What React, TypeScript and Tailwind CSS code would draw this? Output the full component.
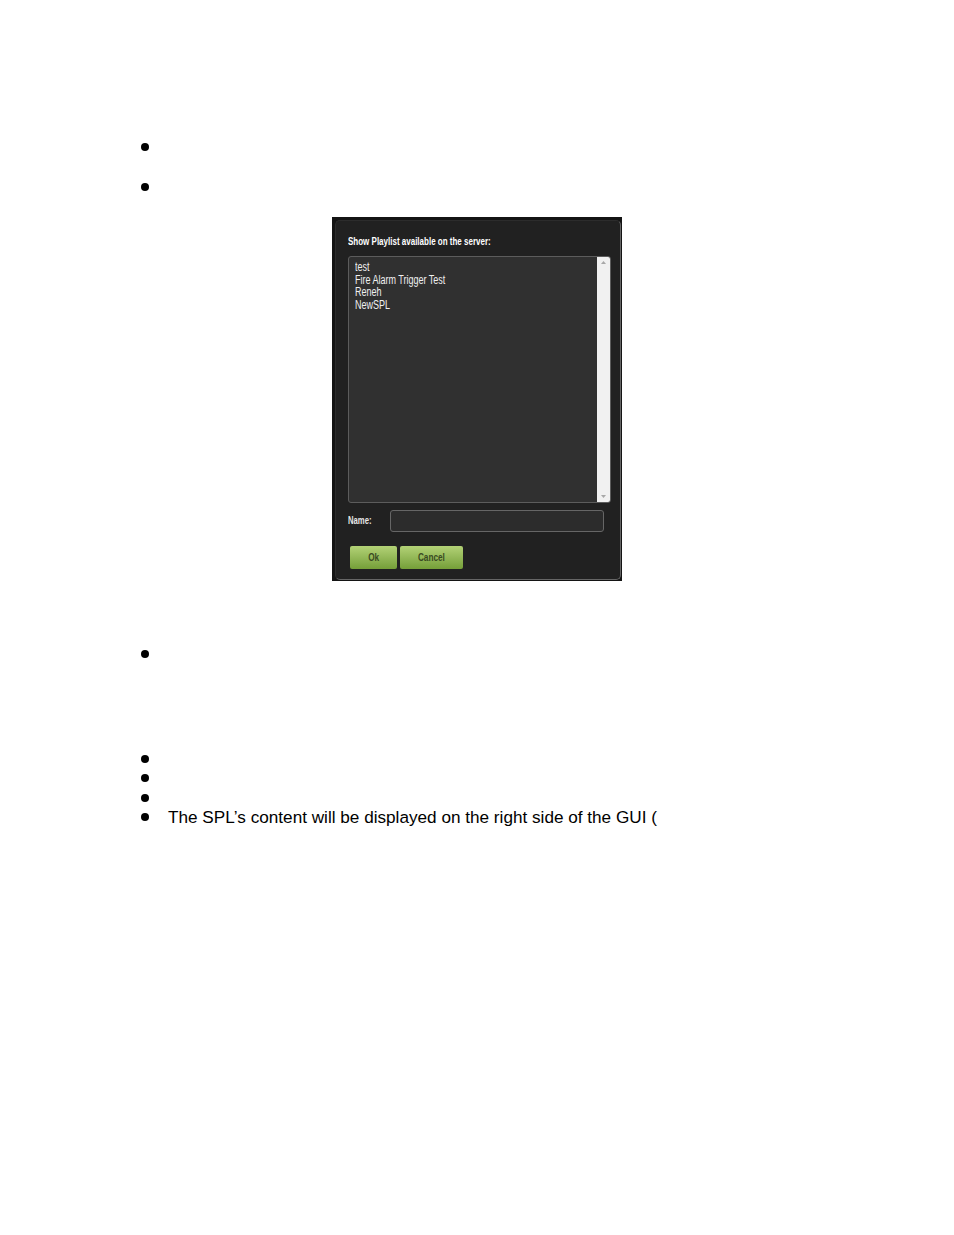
import React from 'react';

const Bullet = () => <div className="w-2 h-2 rounded-full bg-black shrink-0" />;

const BulletRow = ({ className, children }: { className: string; children?: React.ReactNode }) => (
  <div className={`flex items-center gap-[19px] pl-[141px] ${className}`}>
    <Bullet />
    {children}
  </div>
);

const names = ['test', 'Fire Alarm Trigger Test', 'Reneh', 'NewSPL'];

const ScrollArrow = ({ up }: { up?: boolean }) => (
  <svg width="7" height="5" viewBox="0 0 7 5">
    <path d={up ? 'M3.5 1 L6 4 L1 4 Z' : 'M1 1 L6 1 L3.5 4 Z'} fill="#a8a8a8" />
  </svg>
);

const PlaylistDialog = () => (
  <div className="w-[290px] h-[364px] bg-[#141414] pl-[3px] pt-[3px] pr-[1px] pb-[1px]">
    <div className="h-full rounded-[5px] border border-t-[#2c2c2c] border-l-[#2c2c2c] border-r-[#666] border-b-[#666] bg-[#212121] pl-[12px] pr-[9px] pt-[11px] font-['Liberation_Sans',sans-serif]">
      <div className="h-[20px] flex items-center whitespace-nowrap text-[10px] font-bold text-white leading-none">
        <span className="inline-block origin-left scale-x-[0.8]">Show Playlist available on the server:</span>
      </div>
      <div className="mt-[4px] h-[247px] flex rounded-[3px] border border-[#5c5c5c] bg-[#303030] overflow-hidden">
        <div className="flex-1 pl-[6px] pt-[4px] text-[12px] leading-[12.7px] text-[#f0f0f0] whitespace-nowrap">
          {names.map((name) => (
            <div key={name} className="origin-left scale-x-[0.75]">{name}</div>
          ))}
        </div>
        <div className="w-[13px] bg-[#f1f1f1] flex flex-col items-center justify-between py-[3px]">
          <ScrollArrow up />
          <ScrollArrow />
        </div>
      </div>
      <div className="mt-[7px] flex items-center h-[22px]">
        <div className="w-[42px] text-[10px] font-bold text-[#e6e6e6] leading-none">
          <span className="inline-block origin-left scale-x-[0.77]">Name:</span>
        </div>
        <div className="w-[214px] h-full rounded-[3px] border border-[#666] bg-[#2c2c2c]" />
      </div>
      <div className="mt-[14px] ml-[2px] flex gap-[3px] text-[10px] font-bold text-[#3a4a22]">
        <div className="w-[47px] h-[23px] rounded-[2px] bg-gradient-to-b from-[#b3d276] to-[#759f38] flex items-center justify-center">
          <span className="scale-x-[0.82]">Ok</span>
        </div>
        <div className="w-[63px] h-[23px] rounded-[2px] bg-gradient-to-b from-[#b3d276] to-[#759f38] flex items-center justify-center">
          <span className="scale-x-[0.82]">Cancel</span>
        </div>
      </div>
    </div>
  </div>
);

export default function App() {
  return (
    <div className="w-[954px] h-[1235px] bg-white pt-[143px] font-['Liberation_Sans',sans-serif] text-black overflow-hidden">
      <BulletRow className="h-2" />
      <BulletRow className="h-2 mt-[32px]" />
      <div className="mt-[26px] pl-[332px]">
        <PlaylistDialog />
      </div>
      <BulletRow className="h-2 mt-[69px]" />
      <BulletRow className="h-2 mt-[97px]" />
      <BulletRow className="h-2 mt-[11px]" />
      <BulletRow className="h-2 mt-[12px]" />
      <BulletRow className="h-2 mt-[11px]">
        <span className="pt-[2px] text-[17.16px] leading-none whitespace-nowrap">The SPL’s content will be displayed on the right side of the GUI (</span>
      </BulletRow>
    </div>
  );
}
